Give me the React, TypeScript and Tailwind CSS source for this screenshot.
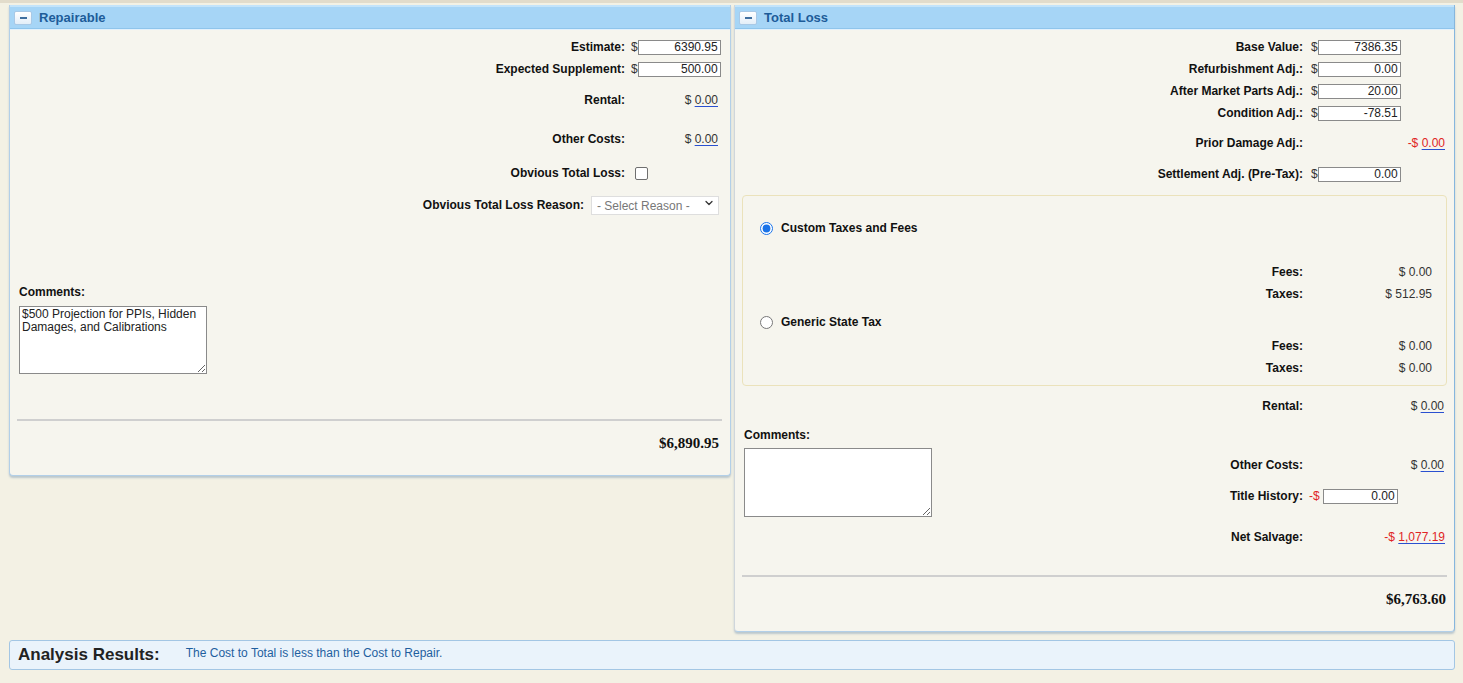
import React from 'react';
import { ChevronDown } from 'lucide-react';

const font = "font-['Liberation_Sans',Arial,sans-serif]";

const PanelHeader: React.FC<{ title: string }> = ({ title }) => (
  <div className="h-[24px] flex items-center bg-[#a6d5f6] border-t-2 border-t-[#c4e4fa] border-b border-b-[#8fc5ec] pl-[4px]">
    <div className="w-[18px] h-[14px] flex items-center justify-center rounded-[2px] border border-[#a9c9e6] bg-gradient-to-b from-white to-[#e3eef8]">
      <div className="w-[7px] h-[2px] bg-[#3f6f9f]" />
    </div>
    <span className="ml-[7px] text-[13px] font-bold text-[#1d5c99] leading-none">{title}</span>
  </div>
);

const Label: React.FC<{ children: React.ReactNode }> = ({ children }) => (
  <div className="flex-1 text-right font-bold text-[12px] text-[#111] whitespace-nowrap">{children}</div>
);

const MoneyInput: React.FC<{ value: string; className?: string }> = ({ value, className }) => (
  <input
    readOnly
    value={value}
    className={`h-[15px] border border-[#8a8a8a] bg-white text-right pr-[2px] text-[12px] text-[#222] outline-none ${className ?? 'w-[83px]'}`}
  />
);

const Linked: React.FC<{ children: React.ReactNode; red?: boolean }> = ({ children, red }) => (
  <span className={`underline decoration-[#2a50d0] underline-offset-2 ${red ? 'text-[#e02424]' : 'text-[#333]'}`}>{children}</span>
);

const Repairable: React.FC = () => (
  <div className="w-[722px] flex flex-col border-x border-b border-[#b2cfe8] rounded-b-[4px] shadow-[0_2px_2px_rgba(120,150,180,0.45)] bg-[#f6f5ee]">
    <PanelHeader title="Repairable" />
    <div className="border-t border-[#e2f1fc] pl-[9px] pr-[10px] pt-[6px] pb-[21px]">
      <div className="flex items-center h-[22px]">
        <Label>Estimate:</Label>
        <div className="w-[95px] pl-[6px] flex items-center text-[12px] text-[#333]">
          $<MoneyInput value="6390.95" />
        </div>
      </div>
      <div className="flex items-center h-[22px]">
        <Label>Expected Supplement:</Label>
        <div className="w-[95px] pl-[6px] flex items-center text-[12px] text-[#333]">
          $<MoneyInput value="500.00" />
        </div>
      </div>
      <div className="flex items-center h-[22px] mt-[9px]">
        <Label>Rental:</Label>
        <div className="w-[95px] pr-[2px] text-right text-[12px] text-[#333]">
          $ <Linked>0.00</Linked>
        </div>
      </div>
      <div className="flex items-center h-[22px] mt-[17px]">
        <Label>Other Costs:</Label>
        <div className="w-[95px] pr-[2px] text-right text-[12px] text-[#333]">
          $ <Linked>0.00</Linked>
        </div>
      </div>
      <div className="flex items-center h-[22px] mt-[12px]">
        <Label>Obvious Total Loss:</Label>
        <div className="w-[95px] pl-[10px] flex items-center">
          <input type="checkbox" className="appearance-none w-[13px] h-[13px] border border-[#6f6f6f] rounded-[2px] bg-white" />
        </div>
      </div>
      <div className="flex items-center justify-end h-[22px] mt-[10px]">
        <span className="font-bold text-[12px] text-[#111]">Obvious Total Loss Reason:</span>
        <div className="relative ml-[7px] mr-[1px]">
          <select className="appearance-none w-[128px] h-[19px] border border-[#dedede] bg-white text-[12px] text-[#777] pl-[5px] outline-none">
            <option>- Select Reason -</option>
          </select>
          <ChevronDown className="absolute right-[4px] top-[4px] w-[12px] h-[12px] text-[#333]" strokeWidth={2.5} />
        </div>
      </div>
      <div className="mt-[69px] h-[14px] leading-[14px] font-bold text-[12px] text-[#111]">Comments:</div>
      <textarea
        readOnly
        className="mt-[7px] block w-[188px] h-[68px] border border-[#8a8a8a] bg-white text-[12px] leading-[13px] text-[#222] px-[2px] py-[1px] resize-y outline-none"
        value="$500 Projection for PPIs, Hidden Damages, and Calibrations"
      />
      <div className="mt-[45px] -ml-[2px] -mr-[2px] border-t-2 border-[#cfcfcf]" />
      <div className="mt-[11px] h-[22px] flex items-center justify-end pr-px font-['Liberation_Serif',serif] font-bold text-[15px] text-[#111]">
        $6,890.95
      </div>
    </div>
  </div>
);

const TaxRow: React.FC<{ label: string; value: string; className?: string }> = ({ label, value, className }) => (
  <div className={`flex items-center h-[22px] ${className ?? ''}`}>
    <Label>{label}</Label>
    <div className="w-[129px] text-right text-[12px] text-[#333]">{value}</div>
  </div>
);

const TotalLoss: React.FC = () => (
  <div className="flex-1 flex flex-col border-x border-b border-l-[#cfd6dc] border-r-[#86b6dd] border-b-[#b2cfe8] rounded-b-[4px] shadow-[0_2px_2px_rgba(120,150,180,0.45)] bg-[#f6f5ee]">
    <PanelHeader title="Total Loss" />
    <div className="border-t border-[#e2f1fc] px-[7px] pt-[6px] pb-[21px]">
      {[
        ['Base Value:', '7386.35'],
        ['Refurbishment Adj.:', '0.00'],
        ['After Market Parts Adj.:', '20.00'],
        ['Condition Adj.:', '-78.51'],
      ].map(([l, v]) => (
        <div key={l} className="flex items-center h-[22px] pr-[3px]">
          <Label>{l}</Label>
          <div className="w-[141px] pl-[8px] flex items-center text-[12px] text-[#333]">
            $<MoneyInput value={v} />
          </div>
        </div>
      ))}
      <div className="flex items-center h-[22px] pr-[2px] mt-[8px]">
        <Label>Prior Damage Adj.:</Label>
        <div className="w-[142px] text-right text-[12px] text-[#e02424]">
          -$ <Linked red>0.00</Linked>
        </div>
      </div>
      <div className="flex items-center h-[22px] pr-[3px] mt-[9px]">
        <Label>Settlement Adj. (Pre-Tax):</Label>
        <div className="w-[141px] pl-[8px] flex items-center text-[12px] text-[#333]">
          $<MoneyInput value="0.00" />
        </div>
      </div>

      <div className="mt-[10px] border border-[#ebe2bb] rounded-[4px] pt-[21px] pb-[6px] pr-[14px]">
        <label className="flex items-center h-[22px] pl-[17px]">
          <input type="radio" name="tax" defaultChecked className="w-[13px] h-[13px] m-0 accent-[#1a73e8]" />
          <span className="ml-[8px] font-bold text-[12px] text-[#111]">Custom Taxes and Fees</span>
        </label>
        <TaxRow label="Fees:" value="$ 0.00" className="mt-[22px]" />
        <TaxRow label="Taxes:" value="$ 512.95" />
        <label className="flex items-center h-[22px] pl-[17px] mt-[6px]">
          <input type="radio" name="tax" className="w-[13px] h-[13px] m-0 accent-[#1a73e8]" />
          <span className="ml-[8px] font-bold text-[12px] text-[#111]">Generic State Tax</span>
        </label>
        <TaxRow label="Fees:" value="$ 0.00" className="mt-[2px]" />
        <TaxRow label="Taxes:" value="$ 0.00" />
      </div>

      <div className="flex">
        <div className="w-[200px] pl-[2px]">
          <div className="mt-[42px] h-[14px] leading-[14px] font-bold text-[12px] text-[#111]">Comments:</div>
          <textarea
            readOnly
            className="mt-[6px] block w-[188px] h-[69px] border border-[#8a8a8a] bg-white text-[12px] resize-y outline-none"
          />
        </div>
        <div className="flex-1 pr-[3px]">
          <div className="flex items-center h-[22px] mt-[9px]">
            <Label>Rental:</Label>
            <div className="w-[141px] text-right text-[12px] text-[#333]">
              $ <Linked>0.00</Linked>
            </div>
          </div>
          <div className="flex items-center h-[22px] mt-[37px]">
            <Label>Other Costs:</Label>
            <div className="w-[141px] text-right text-[12px] text-[#333]">
              $ <Linked>0.00</Linked>
            </div>
          </div>
          <div className="flex items-center h-[22px] mt-[9px]">
            <Label>Title History:</Label>
            <div className="w-[141px] pl-[6px] flex items-center text-[12px] text-[#e02424]">
              -$<MoneyInput value="0.00" className="w-[75px] ml-[3px]" />
            </div>
          </div>
          <div className="flex items-center h-[22px] mt-[19px]">
            <Label>Net Salvage:</Label>
            <div className="w-[142px] -mr-px text-right text-[12px] text-[#e02424]">
              -$ <Linked red>1,077.19</Linked>
            </div>
          </div>
        </div>
      </div>

      <div className="mt-[27px] border-t-2 border-[#cfcfcf]" />
      <div className="mt-[11px] h-[22px] flex items-center justify-end pr-px font-['Liberation_Serif',serif] font-bold text-[15px] text-[#111]">
        $6,763.60
      </div>
    </div>
  </div>
);

export default function App() {
  return (
    <div className={`min-h-[683px] bg-[#f3f1e4] ${font}`}>
      <div className="h-[3px] bg-[#e2dccb]" />
      <div className="pl-[9px] pr-[8px] pt-[2px]">
        <div className="flex items-start gap-[3px]">
          <Repairable />
          <TotalLoss />
        </div>
        <div className="mt-[8px] h-[30px] flex items-center border border-[#a3c6e4] rounded-[3px] bg-[#eaf3fb] pl-[8px]">
          <span className="font-bold text-[17px] text-[#222]">Analysis Results:</span>
          <span className="ml-[26px] text-[12px] text-[#1f5f9f] -mt-[4px]">The Cost to Total is less than the Cost to Repair.</span>
        </div>
      </div>
    </div>
  );
}
